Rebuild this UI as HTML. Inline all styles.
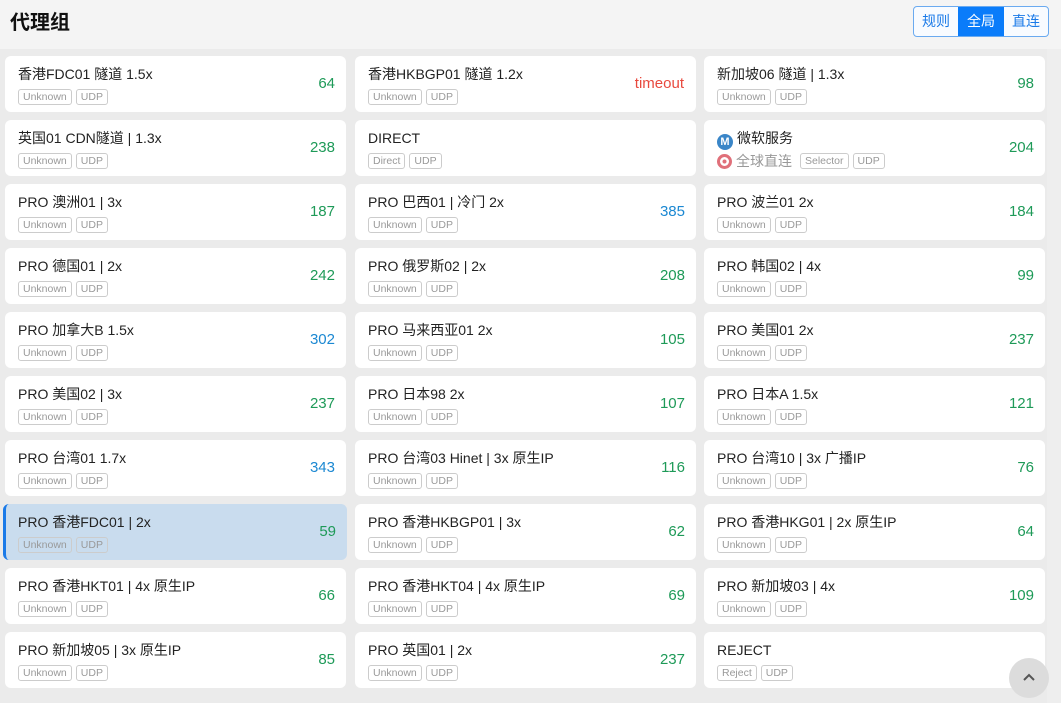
<!DOCTYPE html>
<html><head><meta charset="utf-8"><style>
*{margin:0;padding:0;box-sizing:border-box}
body{width:1061px;height:703px;overflow:hidden;background:#ebebeb;font-family:"Liberation Sans","Noto Sans CJK SC",sans-serif;position:relative}
.hd{position:absolute;left:0;top:0;width:1061px;height:49px;background:#f4f4f4}
.hd h1{position:absolute;left:10px;top:9px;font-size:20px;font-weight:bold;color:#111;line-height:28px}
.bg{position:absolute;left:913px;top:6px;height:31px;display:flex;border:1px solid #6aaaf0;border-radius:4px;overflow:hidden;background:#f8fbff}
.bg span{display:block;width:44px;line-height:29px;text-align:center;font-size:14px;color:#1a7ae8}
.bg span.a{background:#0a7cfa;color:#fff;width:46px}
.sb{position:absolute;left:1047px;top:49px;width:14px;height:654px;background:#eeeeee}
.c{position:absolute;width:341px;height:56px;background:#fff;border-radius:6px}
.c.s{background:#c9dcee;border-left:3px solid #1a7ae8}
.t{position:absolute;left:13px;top:9px;font-size:14px;color:#222;line-height:18px;white-space:nowrap}
.s .t,.s .g{left:12px}
.g{position:absolute;left:13px;top:33px;display:flex;gap:4px}
.g span{font-size:10.5px;color:#999;border:1px solid #ccc;border-radius:3px;line-height:14px;padding:0 4px}
.n{position:absolute;right:11px;top:19px;font-size:15px;line-height:18px;color:#1e9a58}
.n.b{color:#1b88d2}.n.r{color:#e8493e;right:12px}
.up{position:absolute;left:1009px;top:658px;width:40px;height:40px;border-radius:50%;background:#dcdcdc}
</style></head><body>
<div class="hd"><h1>代理组</h1>
<div class="bg"><span>规则</span><span class="a">全局</span><span>直连</span></div></div>
<div class="sb"></div>
<div class="c" style="left:5px;top:56px"><div class="t">香港FDC01 隧道 1.5x</div><div class="g"><span>Unknown</span><span>UDP</span></div><div class="n">64</div></div>
<div class="c" style="left:355px;top:56px"><div class="t">香港HKBGP01 隧道 1.2x</div><div class="g"><span>Unknown</span><span>UDP</span></div><div class="n r">timeout</div></div>
<div class="c" style="left:704px;top:56px"><div class="t">新加坡06 隧道 | 1.3x</div><div class="g"><span>Unknown</span><span>UDP</span></div><div class="n">98</div></div>

<div class="c" style="left:5px;top:120px"><div class="t">英国01 CDN隧道 | 1.3x</div><div class="g"><span>Unknown</span><span>UDP</span></div><div class="n">238</div></div>
<div class="c" style="left:355px;top:120px"><div class="t">DIRECT</div><div class="g"><span>Direct</span><span>UDP</span></div></div>
<div class="c" style="left:704px;top:120px"><div class="t"><span style="display:inline-block;width:16px;height:16px;border-radius:50%;background:#3a86c8;color:#fff;font-size:11px;font-weight:bold;text-align:center;line-height:16px;vertical-align:-2px;margin-right:4px">M</span>微软服务</div>
<div class="g" style="top:31px;align-items:center"><b style="display:inline-block;width:15px;height:15px;border-radius:50%;border:3px solid #e0707a;background:radial-gradient(#e0707a 30%,#fff 31%);"></b><em style="font-style:normal;font-size:14px;color:#999;margin-right:4px">全球直连</em><span>Selector</span><span>UDP</span></div><div class="n">204</div></div>

<div class="c" style="left:5px;top:184px"><div class="t">PRO 澳洲01 | 3x</div><div class="g"><span>Unknown</span><span>UDP</span></div><div class="n">187</div></div>
<div class="c" style="left:355px;top:184px"><div class="t">PRO 巴西01 | 冷门 2x</div><div class="g"><span>Unknown</span><span>UDP</span></div><div class="n b">385</div></div>
<div class="c" style="left:704px;top:184px"><div class="t">PRO 波兰01 2x</div><div class="g"><span>Unknown</span><span>UDP</span></div><div class="n">184</div></div>

<div class="c" style="left:5px;top:248px"><div class="t">PRO 德国01 | 2x</div><div class="g"><span>Unknown</span><span>UDP</span></div><div class="n">242</div></div>
<div class="c" style="left:355px;top:248px"><div class="t">PRO 俄罗斯02 | 2x</div><div class="g"><span>Unknown</span><span>UDP</span></div><div class="n">208</div></div>
<div class="c" style="left:704px;top:248px"><div class="t">PRO 韩国02 | 4x</div><div class="g"><span>Unknown</span><span>UDP</span></div><div class="n">99</div></div>

<div class="c" style="left:5px;top:312px"><div class="t">PRO 加拿大B 1.5x</div><div class="g"><span>Unknown</span><span>UDP</span></div><div class="n b">302</div></div>
<div class="c" style="left:355px;top:312px"><div class="t">PRO 马来西亚01 2x</div><div class="g"><span>Unknown</span><span>UDP</span></div><div class="n">105</div></div>
<div class="c" style="left:704px;top:312px"><div class="t">PRO 美国01 2x</div><div class="g"><span>Unknown</span><span>UDP</span></div><div class="n">237</div></div>

<div class="c" style="left:5px;top:376px"><div class="t">PRO 美国02 | 3x</div><div class="g"><span>Unknown</span><span>UDP</span></div><div class="n">237</div></div>
<div class="c" style="left:355px;top:376px"><div class="t">PRO 日本98 2x</div><div class="g"><span>Unknown</span><span>UDP</span></div><div class="n">107</div></div>
<div class="c" style="left:704px;top:376px"><div class="t">PRO 日本A 1.5x</div><div class="g"><span>Unknown</span><span>UDP</span></div><div class="n">121</div></div>

<div class="c" style="left:5px;top:440px"><div class="t">PRO 台湾01 1.7x</div><div class="g"><span>Unknown</span><span>UDP</span></div><div class="n b">343</div></div>
<div class="c" style="left:355px;top:440px"><div class="t">PRO 台湾03 Hinet | 3x 原生IP</div><div class="g"><span>Unknown</span><span>UDP</span></div><div class="n">116</div></div>
<div class="c" style="left:704px;top:440px"><div class="t">PRO 台湾10 | 3x 广播IP</div><div class="g"><span>Unknown</span><span>UDP</span></div><div class="n">76</div></div>

<div class="c s" style="left:3px;top:504px;width:344px"><div class="t">PRO 香港FDC01 | 2x</div><div class="g"><span>Unknown</span><span>UDP</span></div><div class="n">59</div></div>
<div class="c" style="left:355px;top:504px"><div class="t">PRO 香港HKBGP01 | 3x</div><div class="g"><span>Unknown</span><span>UDP</span></div><div class="n">62</div></div>
<div class="c" style="left:704px;top:504px"><div class="t">PRO 香港HKG01 | 2x 原生IP</div><div class="g"><span>Unknown</span><span>UDP</span></div><div class="n">64</div></div>

<div class="c" style="left:5px;top:568px"><div class="t">PRO 香港HKT01 | 4x 原生IP</div><div class="g"><span>Unknown</span><span>UDP</span></div><div class="n">66</div></div>
<div class="c" style="left:355px;top:568px"><div class="t">PRO 香港HKT04 | 4x 原生IP</div><div class="g"><span>Unknown</span><span>UDP</span></div><div class="n">69</div></div>
<div class="c" style="left:704px;top:568px"><div class="t">PRO 新加坡03 | 4x</div><div class="g"><span>Unknown</span><span>UDP</span></div><div class="n">109</div></div>

<div class="c" style="left:5px;top:632px"><div class="t">PRO 新加坡05 | 3x 原生IP</div><div class="g"><span>Unknown</span><span>UDP</span></div><div class="n">85</div></div>
<div class="c" style="left:355px;top:632px"><div class="t">PRO 英国01 | 2x</div><div class="g"><span>Unknown</span><span>UDP</span></div><div class="n">237</div></div>
<div class="c" style="left:704px;top:632px"><div class="t">REJECT</div><div class="g"><span>Reject</span><span>UDP</span></div></div>

<div class="up"><svg width="40" height="40" viewBox="0 0 40 40"><path d="M15 22 L20 17 L25 22" fill="none" stroke="#555" stroke-width="2"/></svg></div>
</body></html>
